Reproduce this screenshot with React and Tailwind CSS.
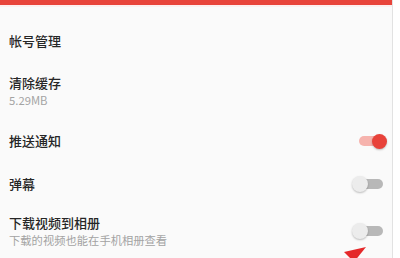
import React, { useState } from "react";

function Toggle({ on, onClick }) {
  return (
    <button
      onClick={onClick}
      className="relative w-[35px] h-[16px] flex items-center shrink-0"
    >
      <span
        className={
          on
            ? "absolute left-[7px] right-[2px] h-[10px] rounded-full bg-[#f6b3ad]"
            : "absolute left-[4px] right-[4px] h-[10px] rounded-full bg-[#b8b8b8]"
        }
      />
      <span
        className={
          on
            ? "absolute right-0 w-[15px] h-[15px] rounded-full bg-[#e8423a] shadow-[0_1px_2px_rgba(0,0,0,0.25)]"
            : "absolute left-0 w-[16px] h-[16px] rounded-full bg-[#ececec] shadow-[0_1px_2px_rgba(0,0,0,0.25)]"
        }
      />
    </button>
  );
}

function Row({ title, sub, h, toggle, on, onToggle }) {
  return (
    <div className={`flex items-center justify-between pl-[9px] pr-[5px] ${h}`}>
      <div className="flex flex-col">
        <span className="text-[13px] leading-[16px] font-medium text-[#262626]">{title}</span>
        {sub && (
          <span className="text-[11.3px] leading-[14px] mt-[2px] text-[#a3a3a3]">{sub}</span>
        )}
      </div>
      {toggle && <Toggle on={on} onClick={onToggle} />}
    </div>
  );
}

export default function App() {
  const [push, setPush] = useState(true);
  const [danmu, setDanmu] = useState(false);
  const [album, setAlbum] = useState(false);

  return (
    <div
      className="relative w-[400px] h-[258px] overflow-hidden bg-white flex"
      style={{ fontFamily: '"Noto Sans CJK SC", "Noto Sans", sans-serif' }}
    >
      <div className="w-[393px] h-full bg-[#fafafa] border-r border-[#e2e2e2] flex flex-col">
        <div className="h-[5px] bg-[#e8443a] shrink-0" />
        <div className="h-[2px] bg-[#fdeeee] shrink-0" />
        <div className="h-[13px] shrink-0" />
        <Row title="帐号管理" h="h-[42px]" />
        <Row title="清除缓存" sub="5.29MB" h="h-[60px]" />
        <Row title="推送通知" h="h-[43px]" toggle on={push} onToggle={() => setPush(!push)} />
        <Row title="弹幕" h="h-[43px]" toggle on={danmu} onToggle={() => setDanmu(!danmu)} />
        <Row
          title="下载视频到相册"
          sub="下载的视频也能在手机相册查看"
          h="h-[54px]"
          toggle
          on={album}
          onToggle={() => setAlbum(!album)}
        />
      </div>
      <svg
        className="absolute left-[330px] top-[240px]"
        width="40"
        height="20"
        viewBox="0 0 40 20"
      >
        <polygon points="36,7 14,12 24,22" fill="#e5282a" />
      </svg>
    </div>
  );
}
